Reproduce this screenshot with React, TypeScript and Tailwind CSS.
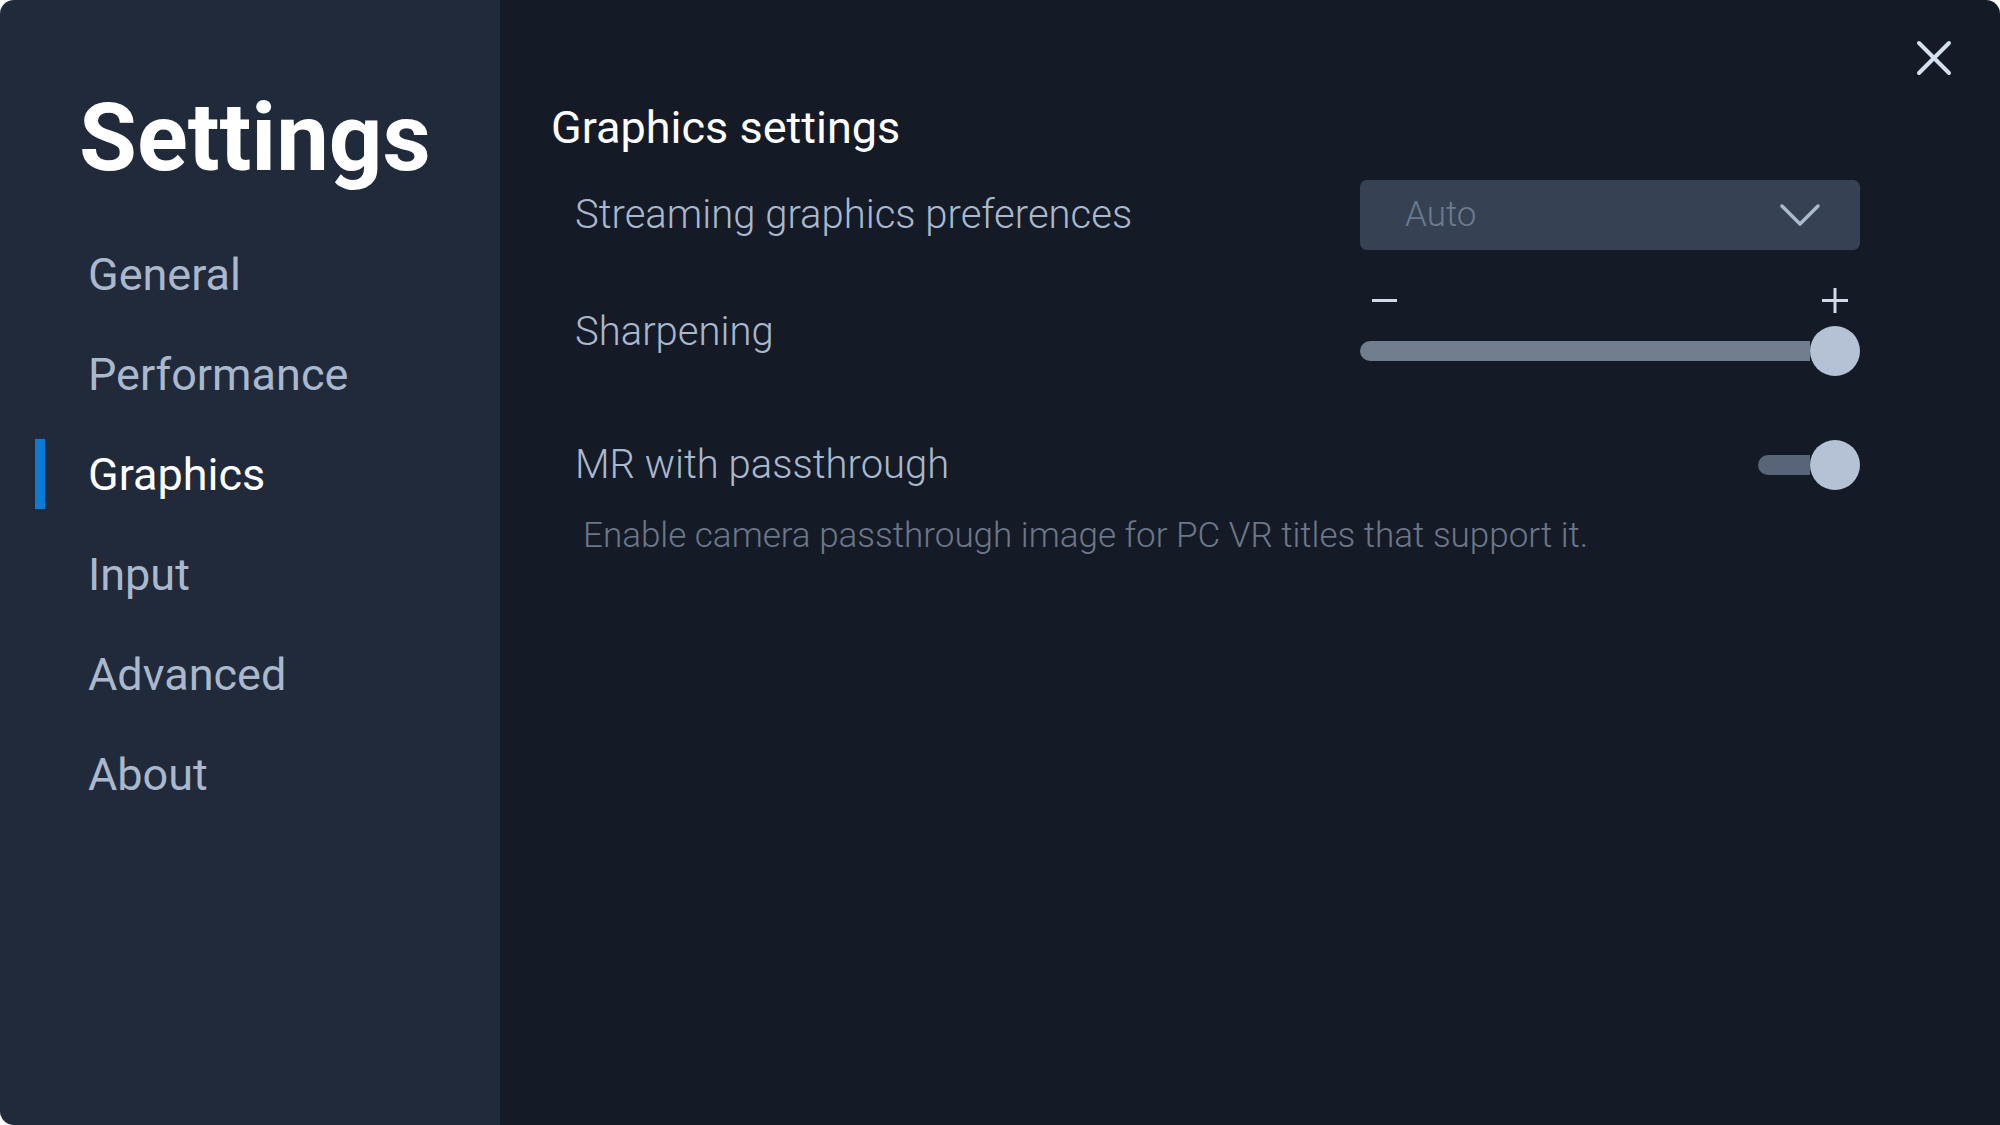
const navItems = ["General", "Performance", "Graphics", "Input", "Advanced", "About"]

export default function App() {
  return (
    <div className="h-[1125px] w-[2000px] bg-white font-['Roboto',sans-serif]">
      <div className="flex h-full w-full overflow-hidden rounded-tl-[14px] rounded-tr-[14px] rounded-bl-[14px]">
        <Sidebar active="Graphics" />
        <main className="relative flex-1 bg-[#151b26] pl-[51px] pr-[140px] pt-[100px]">
          <button className="absolute right-[47px] top-[39px]">
            <svg width="38" height="38" viewBox="0 0 38 38" fill="none">
              <path
                d="M4 4 L34 34 M34 4 L4 34"
                stroke="#d5e0ee"
                strokeWidth="4"
                strokeLinecap="round"
              />
            </svg>
          </button>
          <h2 className="text-[45px] leading-[56px] text-white">Graphics settings</h2>

          <div className="mt-[24px] flex flex-col pl-[24px]">
            <Row label="Streaming graphics preferences">
              <Dropdown value="Auto" />
            </Row>
            <Row label="Sharpening" className="mt-[38px]">
              <Slider />
            </Row>
            <Row label="MR with passthrough" className="mt-[64px]">
              <div className="flex h-[50px] items-center justify-end">
                <div className="h-[20px] w-[52px] rounded-l-full bg-[#586578]" />
                <div className="h-[50px] w-[50px] rounded-full bg-[#b5c2d6]" />
              </div>
            </Row>
            <p className="mt-[26px] pl-[8px] text-[35px] font-light leading-[40px] text-[#6c7789]">
              Enable camera passthrough image for PC VR titles that support it.
            </p>
          </div>
        </main>
      </div>
    </div>
  )
}

function Sidebar({ active }: { active: string }) {
  return (
    <aside className="flex w-[500px] shrink-0 flex-col bg-[#212a3a] pt-[91px]">
      <h1 className="pl-[79px] text-[94px] font-bold leading-[94px] text-white">Settings</h1>
      <ul className="mt-[40px] flex flex-col">
        {navItems.map((item) => (
          <li
            key={item}
            className={`relative h-[100px] pl-[88px] text-[45px] leading-[100px] ${
              item === active ? "text-white" : "text-[#aab8cd]"
            }`}
          >
            {item === active && (
              <span className="absolute left-[35px] top-[14px] h-[70px] w-[10px] bg-[#0c7bd8]" />
            )}
            {item}
          </li>
        ))}
      </ul>
    </aside>
  )
}

function Row({
  label,
  children,
  className = "",
}: {
  label: string
  children: React.ReactNode
  className?: string
}) {
  return (
    <div className={`flex items-center justify-between ${className}`}>
      <span className="text-[40px] font-light leading-[48px] text-[#aab8cd]">{label}</span>
      <div className="w-[500px]">{children}</div>
    </div>
  )
}

function Dropdown({ value }: { value: string }) {
  return (
    <div className="flex h-[70px] items-center justify-between rounded-[7px] bg-[#364154] pl-[45px] pr-[40px]">
      <span className="text-[35px] font-light text-[#6b7a8e]">{value}</span>
      <svg width="40" height="22" viewBox="0 0 40 22" fill="none">
        <path
          d="M2 2 L20 20 L38 2"
          stroke="#a9b8cc"
          strokeWidth="3.5"
          strokeLinecap="round"
          strokeLinejoin="round"
        />
      </svg>
    </div>
  )
}

function Slider() {
  return (
    <div className="flex flex-col gap-[13px]">
      <div className="flex h-[25px] items-center justify-between pl-[12px] pr-[12px]">
        <svg width="25" height="25" viewBox="0 0 25 25">
          <rect x="0" y="11" width="25" height="3" fill="#d0dae8" />
        </svg>
        <svg width="26" height="25" viewBox="0 0 26 25">
          <rect x="0" y="11" width="26" height="3" fill="#d0dae8" />
          <rect x="11.5" y="0" width="3" height="25" fill="#d0dae8" />
        </svg>
      </div>
      <div className="flex h-[50px] items-center">
        <div className="h-[20px] flex-1 rounded-l-full bg-[#6f7d8f]" />
        <div className="h-[50px] w-[50px] rounded-full bg-[#b5c2d6]" />
      </div>
    </div>
  )
}
